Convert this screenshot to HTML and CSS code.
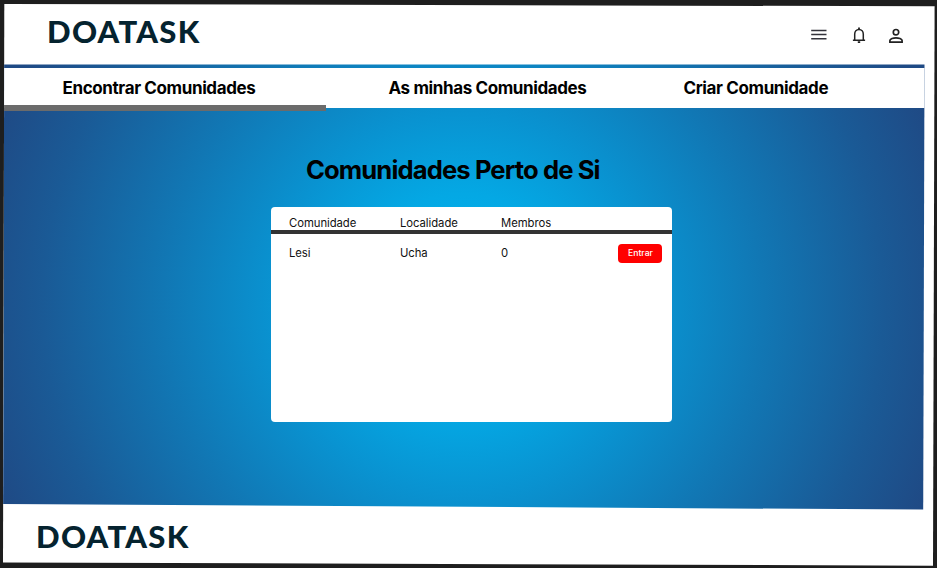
FILE: index.html
```
<!DOCTYPE html>
<html lang="pt">
<head>
<meta charset="utf-8">
<title>Doatask</title>
<link rel="stylesheet" href="styles.css">
</head>
<body>
<div class="page">
  <header class="header">
    <div class="logo">DOATASK</div>
    <div class="actions">
      <svg class="menu" width="16" height="11" viewBox="0 0 16 11"><path d="M.2 1.5h15.3M.2 5.6h15.3M.2 9.7h15.3" stroke="#33333b" stroke-width="1.5"/></svg>
      <svg class="bell" width="14" height="17" viewBox="0 0 14 17" fill="none" stroke="#222"><path d="M2.7 13V7.2C2.7 4.6 4.5 2.5 7 2.5s4.3 2.1 4.3 4.7V13M.9 13.2h12.2" stroke-width="1.5"/><path d="M7 .5v2M5.8 15.1h2.4" stroke-width="1.8"/></svg>
      <svg class="user" width="16" height="16" viewBox="0 0 16 16" fill="none" stroke="#222" stroke-width="1.7"><circle cx="8" cy="4.2" r="2.7"/><path d="M1.9 14.1v-1.5c0-1.8 3.6-2.8 6.1-2.8s6.1 1 6.1 2.8v1.5z"/></svg>
    </div>
  </header>
  <div class="backdrop">
    <nav class="tabs">
      <a class="tab find">Encontrar Comunidades</a>
      <a class="tab mine">As minhas Comunidades</a>
      <a class="tab create">Criar Comunidade</a>
      <span class="marker"></span>
    </nav>
    <main class="main">
      <h1 class="title">Comunidades Perto de Si</h1>
      <section class="card">
        <div class="row head"><span>Comunidade</span><span>Localidade</span><span>Membros</span></div>
        <div class="row item"><span>Lesi</span><span>Ucha</span><span>0</span><button class="join">Entrar</button></div>
      </section>
    </main>
  </div>
  <footer class="footer"><div class="logo">DOATASK</div></footer>
</div>
</body>
</html>
```
FILE: styles.css
```
* { box-sizing: border-box; }
body { margin: 0; background: #1e1e1e; font-family: Inter, sans-serif; color: #000; overflow: hidden; }
.page {
  width: 937px; height: 568px; background: #fff;
  display: flex; flex-direction: column;
  clip-path: polygon(4.3px 4px, 934.6px 6.3px, 933px 565.7px, 3px 562.5px);
}
.header { height: 64px; display: flex; justify-content: space-between; padding: 0 33px 0 47px; }
.logo { font: 900 31px/36px Lato, sans-serif; letter-spacing: 1.3px; color: #05232f; white-space: nowrap; }
.header .logo { padding-top: 13px; }
.actions { display: flex; }
.menu { margin: 29px 25px 0 0; }
.bell { margin: 27px 22px 0 0; }
.user { margin-top: 28px; }
.backdrop {
  height: 446px;
  background: radial-gradient(circle at 463px 240px, #00b6f3 0, #04a8e4 110px, #0993d1 190px, #1177b4 300px, #1a5a96 420px, #1f4a85 500px);
  clip-path: polygon(4px 0.6px, 924.5px 0.6px, 923.2px 445.6px, 3px 440px);
}
.tabs { position: relative; height: 40.5px; margin: 3.8px -13px 0 0; padding-top: 9.5px; background: #fff; display: grid; grid-template-columns: 326px 295px 1fr; }
.tab { font-weight: 700; font-size: 17px; line-height: 22px; letter-spacing: -0.38px; white-space: nowrap; }
.find { padding-left: 62.5px; }
.mine { padding-left: 62.5px; }
.create { padding-left: 62.5px; }
.marker { position: absolute; left: 3px; top: 37.5px; width: 323px; height: 6px; background: #6b6b6b; }
.main { width: 401px; margin-left: 271px; }
.title { margin: 45.5px 0 0 35px; font-weight: 700; font-size: 25.6px; line-height: 32px; letter-spacing: -0.89px; white-space: nowrap; }
.card { margin: 21px 0 0 0.3px; height: 215px; width: 400.7px; background: #fff; border-radius: 4px; }
.row { display: grid; grid-template-columns: 111px 101px 117.5px 44px; padding-left: 17.7px; font-size: 11.3px; line-height: 16px; letter-spacing: -0.05px; color: #111; }
.head { height: 27.7px; padding-top: 8px; border-bottom: 4px solid #333; }
.item { padding-top: 11px; }
.join { width: 44px; height: 19px; margin-top: -1px; padding: 0; border: 0; border-radius: 4px; background: #f00; color: #fff; font: 500 8.6px/19px Inter, sans-serif; }
.footer { padding: 8px 0 0 36px; }
```
